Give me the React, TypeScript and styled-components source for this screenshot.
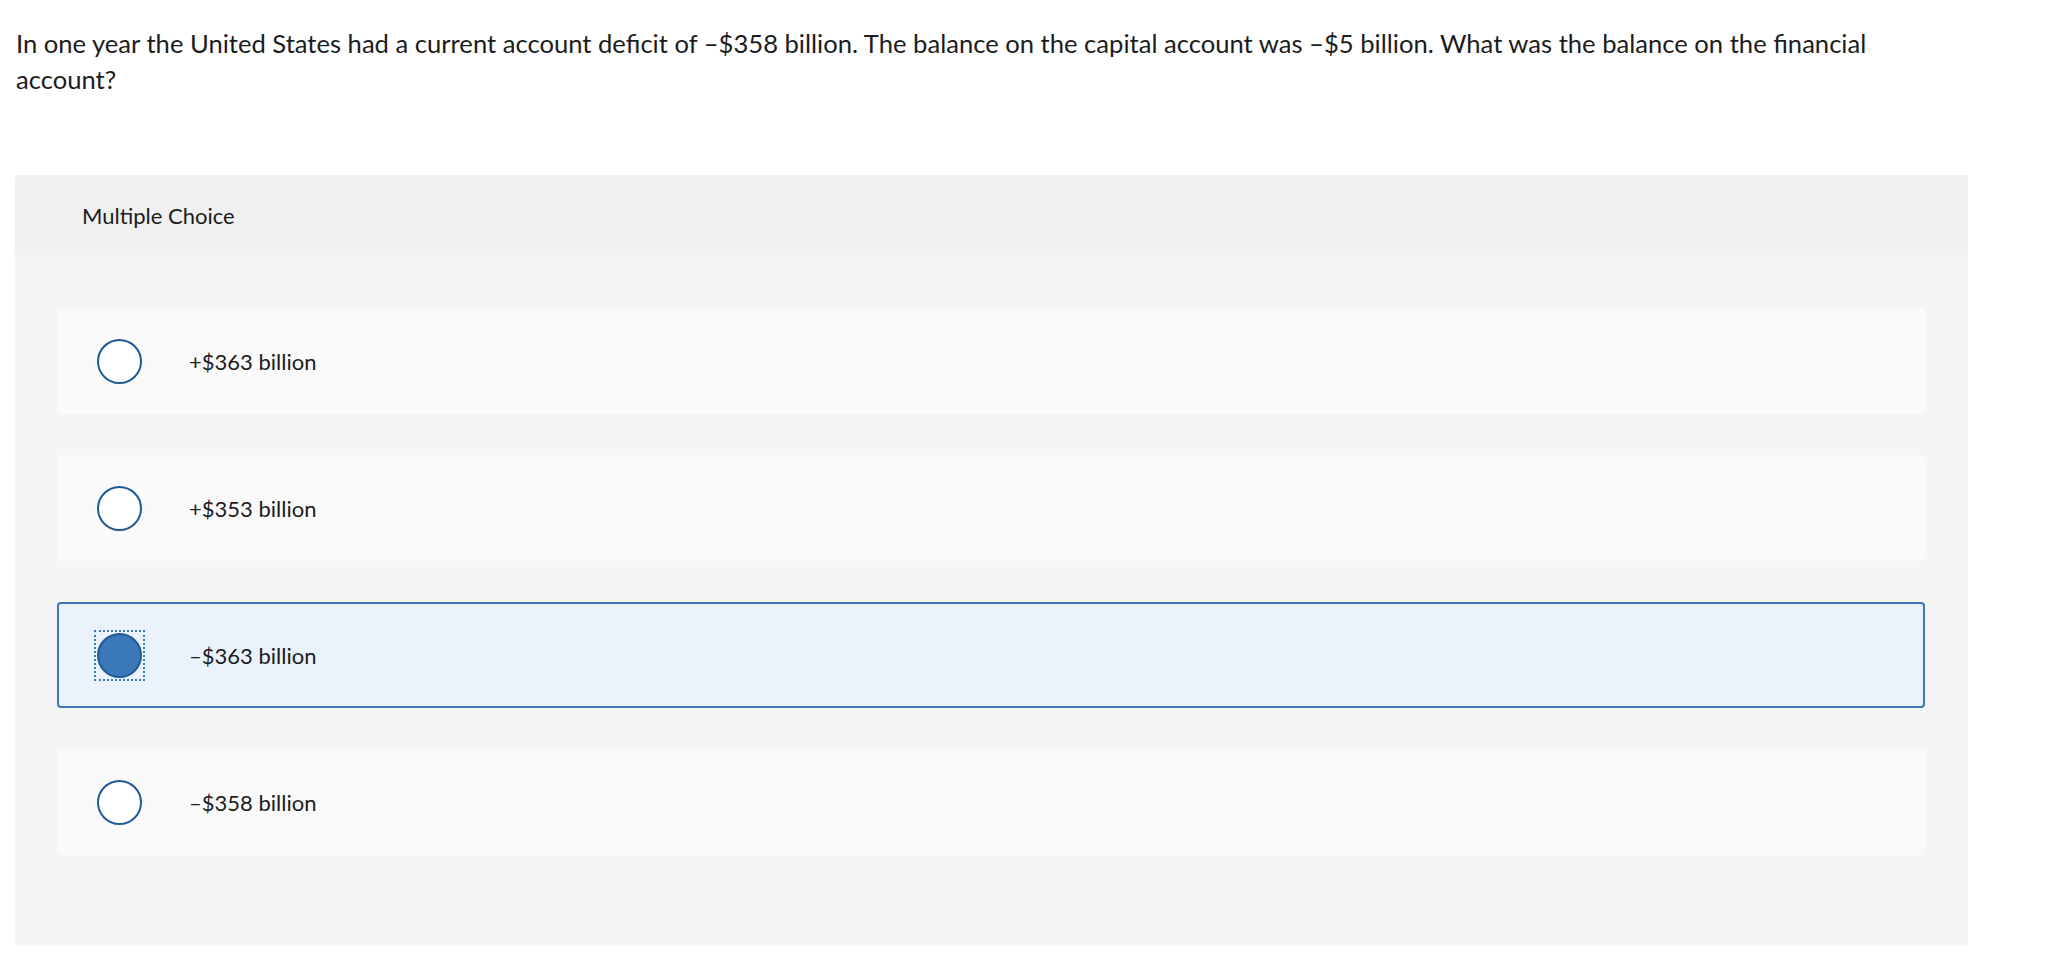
import React, { useState } from "react";
import styled, { createGlobalStyle } from "styled-components";

const GlobalStyle = createGlobalStyle`
  html, body {
    margin: 0;
    padding: 0;
    background: #ffffff;
  }
  body {
    font-family: Lato, "Liberation Sans", sans-serif;
    color: #1c1c1c;
  }
`;

const Page = styled.div`
  padding: 25px 0 0 0;
`;

const Question = styled.p`
  margin: 0 0 78px 16px;
  max-width: 1880px;
  font-size: 25.6px;
  line-height: 36px;
  color: #1c1c1c;
`;

const Panel = styled.section`
  margin-left: 15px;
  width: 1953px;
  background: #f5f5f5;
  border-radius: 4px;
  overflow: hidden;
`;

const PanelHeader = styled.div`
  height: 80px;
  display: flex;
  align-items: center;
  padding-left: 67px;
  background: #f0f0f0;
  font-size: 22px;
  color: #1c1c1c;
`;

const Choices = styled.div`
  display: flex;
  flex-direction: column;
  gap: 41px;
  padding: 53px 43px 90px 42px;
`;

const Choice = styled.label<{ $selected: boolean }>`
  height: 106px;
  box-sizing: border-box;
  display: flex;
  align-items: center;
  padding-left: ${(p) => (p.$selected ? "38px" : "40px")};
  border-radius: 4px;
  background: ${(p) => (p.$selected ? "#eaf2fb" : "#fafafa")};
  border: ${(p) => (p.$selected ? "2px solid #3b78b9" : "none")};
  cursor: pointer;
`;

const RadioWrap = styled.span<{ $focus: boolean }>`
  display: flex;
  outline: ${(p) => (p.$focus ? "2px dotted #3b78b9" : "none")};
  outline-offset: 1px;
`;

const Radio = styled.span<{ $checked: boolean }>`
  width: 45px;
  height: 45px;
  box-sizing: border-box;
  border-radius: 50%;
  border: 2px solid #1f5a94;
  background: ${(p) => (p.$checked ? "#3b78b9" : "#ffffff")};
  flex-shrink: 0;
`;

const ChoiceText = styled.span`
  margin-left: 47px;
  font-size: 22px;
  color: #1c1c1c;
`;

const options = ["+$363 billion", "+$353 billion", "\u2013$363 billion", "\u2013$358 billion"];

export default function App() {
  const [selected, setSelected] = useState(2);
  return (
    <>
      <GlobalStyle />
      <Page>
        <Question>
          In one year the United States had a current account deficit of &ndash;$358 billion. The balance on
          the capital account was &ndash;$5 billion. What was the balance on the financial account?
        </Question>
        <Panel>
          <PanelHeader>Multiple Choice</PanelHeader>
          <Choices>
            {options.map((o, i) => (
              <Choice key={o} $selected={selected === i} onClick={() => setSelected(i)}>
                <RadioWrap $focus={selected === i}>
                  <Radio $checked={selected === i} />
                </RadioWrap>
                <ChoiceText>{o}</ChoiceText>
              </Choice>
            ))}
          </Choices>
        </Panel>
      </Page>
    </>
  );
}
